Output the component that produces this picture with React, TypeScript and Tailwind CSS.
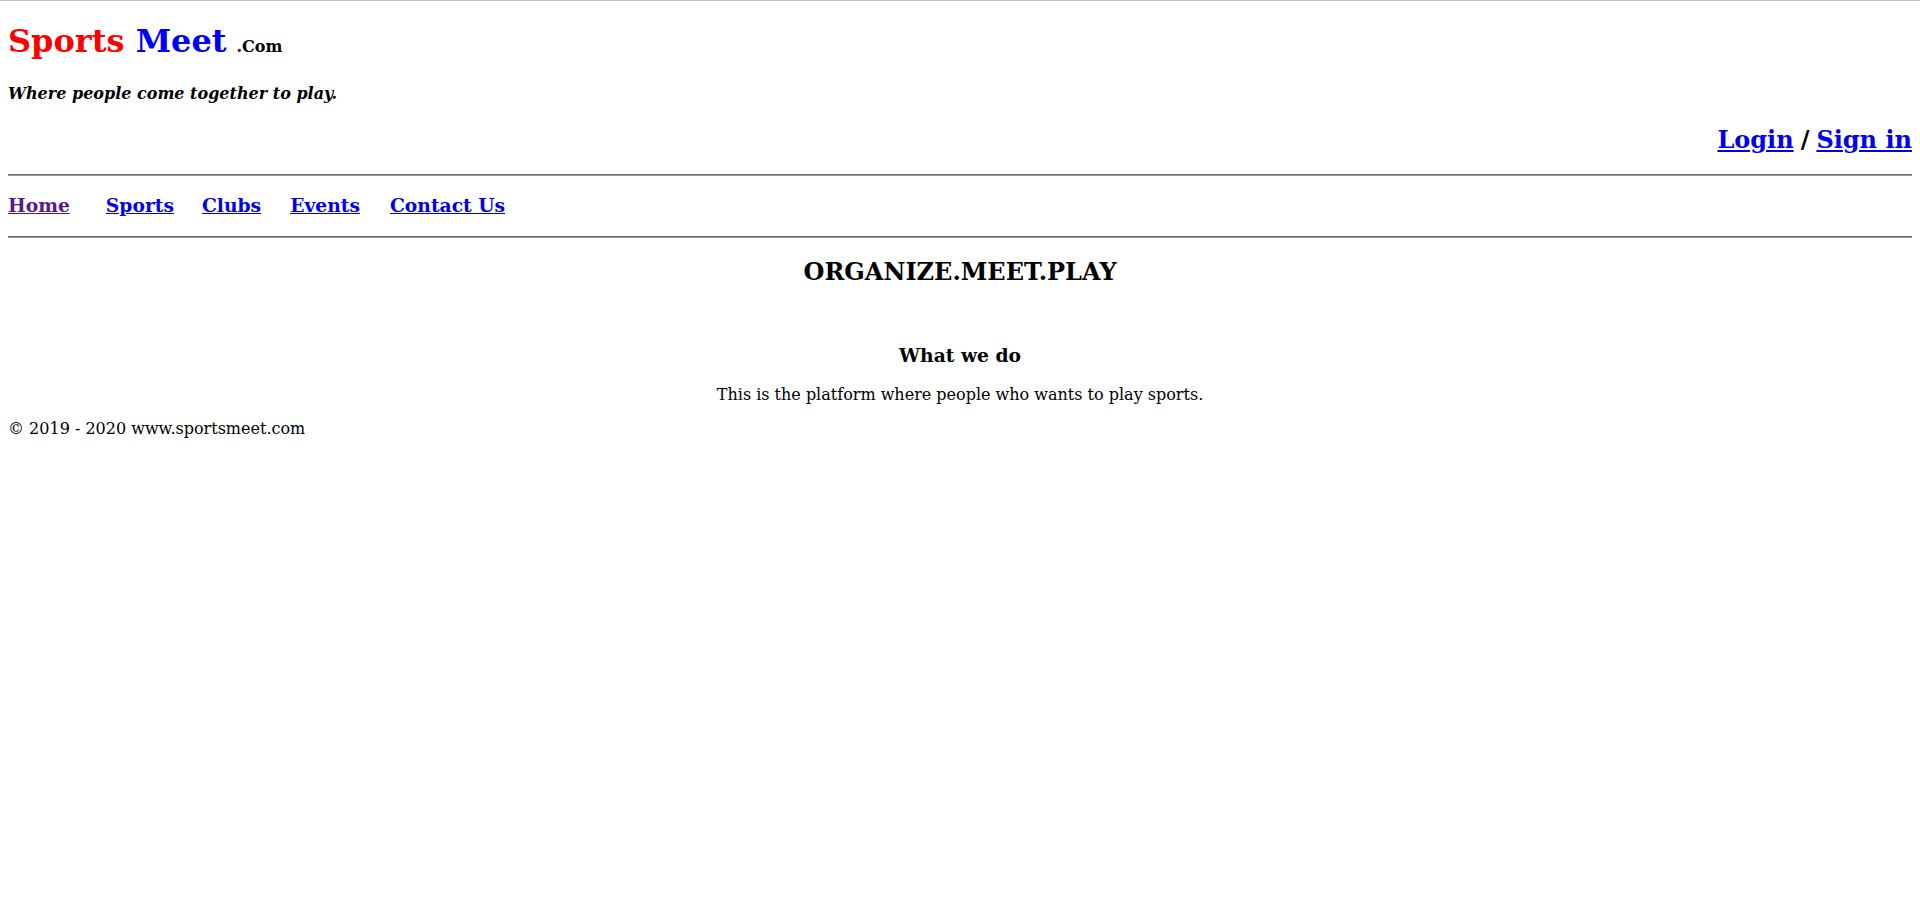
const navLinks = [
  { label: "Home", visited: true, gap: "" },
  { label: "Sports", gap: "ml-[36px]" },
  { label: "Clubs", gap: "ml-[28px]" },
  { label: "Events", gap: "ml-[29px]" },
  { label: "Contact Us", gap: "ml-[30px]" },
];

function Rule({ className }: { className: string }) {
  return <div className={`h-[2px] border-t border-t-[#6a6a6a] border-b border-b-[#9a9a9a] ${className}`} />;
}

export default function App() {
  return (
    <div className="min-h-[920px] w-full border-t border-t-[#c0c0c0] bg-white font-['DejaVu_Serif',serif] text-black">
      <div className="flex flex-col px-2">
        <h1 className="mt-[21px] flex items-baseline gap-[10px] text-[32px] font-bold leading-[normal]">
          <span>
            <span className="text-[#ff0000]">Sports</span> <span className="text-[#0000ff]">Meet</span>
          </span>
          <span className="text-[16px]">.Com</span>
        </h1>

        <p className="mt-[24px] text-[16px] font-bold italic leading-[normal]">
          Where people come together to play.
        </p>

        <div className="mt-[22px] flex justify-end text-[24px] font-bold leading-[normal]">
          <a href="#" className="text-[#0000ee] underline">Login</a>
          <span className="px-[7px]">/</span>
          <a href="#" className="text-[#0000ee] underline">Sign in</a>
        </div>

        <Rule className="mt-[20px]" />

        <nav className="mt-[18px] flex text-[18.72px] font-bold leading-[normal]">
          {navLinks.map((l) => (
            <a
              key={l.label}
              href="#"
              className={`underline ${l.visited ? "text-[#551a8b]" : "text-[#0000ee]"} ${l.gap}`}
            >
              {l.label}
            </a>
          ))}
        </nav>

        <Rule className="mt-[20px]" />

        <h2 className="mt-[19px] text-center text-[24px] font-bold leading-[normal]">ORGANIZE.MEET.PLAY</h2>

        <h3 className="mt-[58px] text-center text-[18.72px] font-bold leading-[normal]">What we do</h3>
        <p className="mt-[19px] text-center text-[16px] leading-[normal]">
          This is the platform where people who wants to play sports.
        </p>

        <footer className="mt-[15px] text-[16px] leading-[normal]">© 2019 - 2020 www.sportsmeet.com</footer>
      </div>
    </div>
  );
}
